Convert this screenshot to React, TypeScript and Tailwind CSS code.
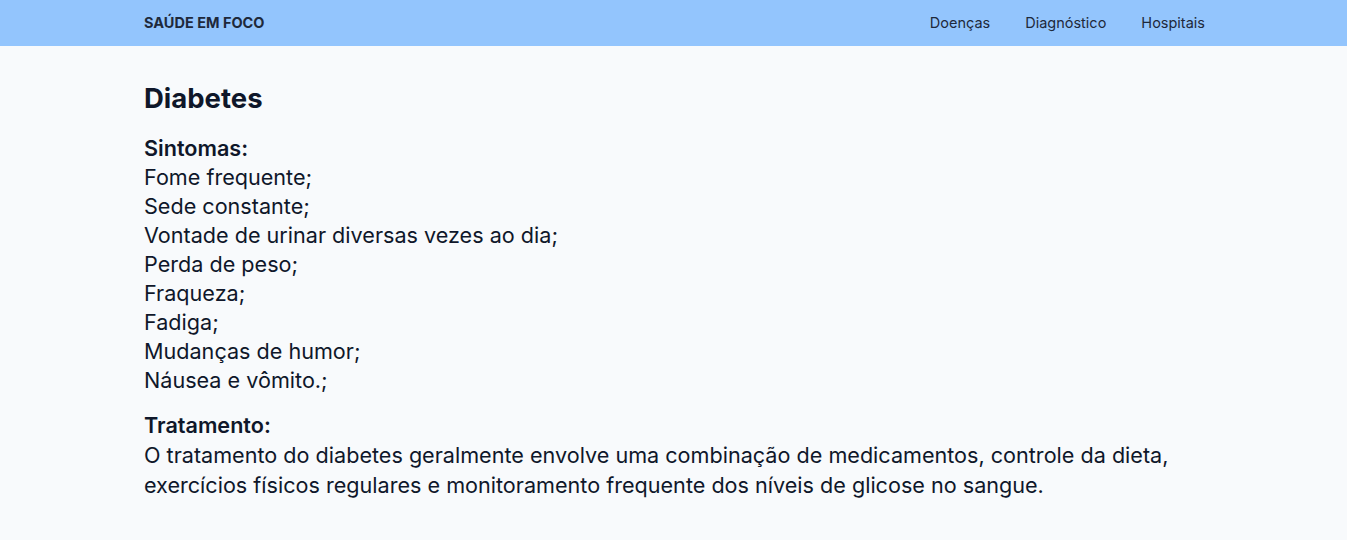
import React from "react";

const sintomas = [
  "Fome frequente;",
  "Sede constante;",
  "Vontade de urinar diversas vezes ao dia;",
  "Perda de peso;",
  "Fraqueza;",
  "Fadiga;",
  "Mudanças de humor;",
  "Náusea e vômito.;",
];

const App = () => {
  return (
    <div
      className="min-h-[540px] bg-[#f8fafc] text-[#0f172a]"
      style={{ fontFamily: "Inter, 'Noto Sans', sans-serif" }}
    >
      <header className="bg-[#93c5fd]">
        <nav className="mx-auto flex h-[46px] w-[1063px] items-center justify-between pl-[2px]">
          <span className="text-[14.5px] font-bold uppercase text-[#1e293b]">
            Saúde em Foco
          </span>
          <ul className="flex gap-[35px] text-[14.5px] text-[#1e293b]">
            <li>Doenças</li>
            <li>Diagnóstico</li>
            <li>Hospitais</li>
          </ul>
        </nav>
      </header>

      <main className="mx-auto w-[1063px] pl-[2px] pt-[35px]">
        <h1 className="text-[27.5px] leading-[34px] font-bold">Diabetes</h1>

        <section className="mt-[19px] text-[21.6px] leading-[29px]">
          <h2 className="font-semibold">Sintomas:</h2>
          <ul>
            {sintomas.map((s) => (
              <li key={s}>{s}</li>
            ))}
          </ul>
        </section>

        <section className="mt-[16px] text-[21.6px] leading-[30px]">
          <h2 className="font-semibold leading-[29px]">Tratamento:</h2>
          <p>
            O tratamento do diabetes geralmente envolve uma combinação de
            medicamentos, controle da dieta, exercícios físicos regulares e
            monitoramento frequente dos níveis de glicose no sangue.
          </p>
        </section>
      </main>
    </div>
  );
};

export default App;
